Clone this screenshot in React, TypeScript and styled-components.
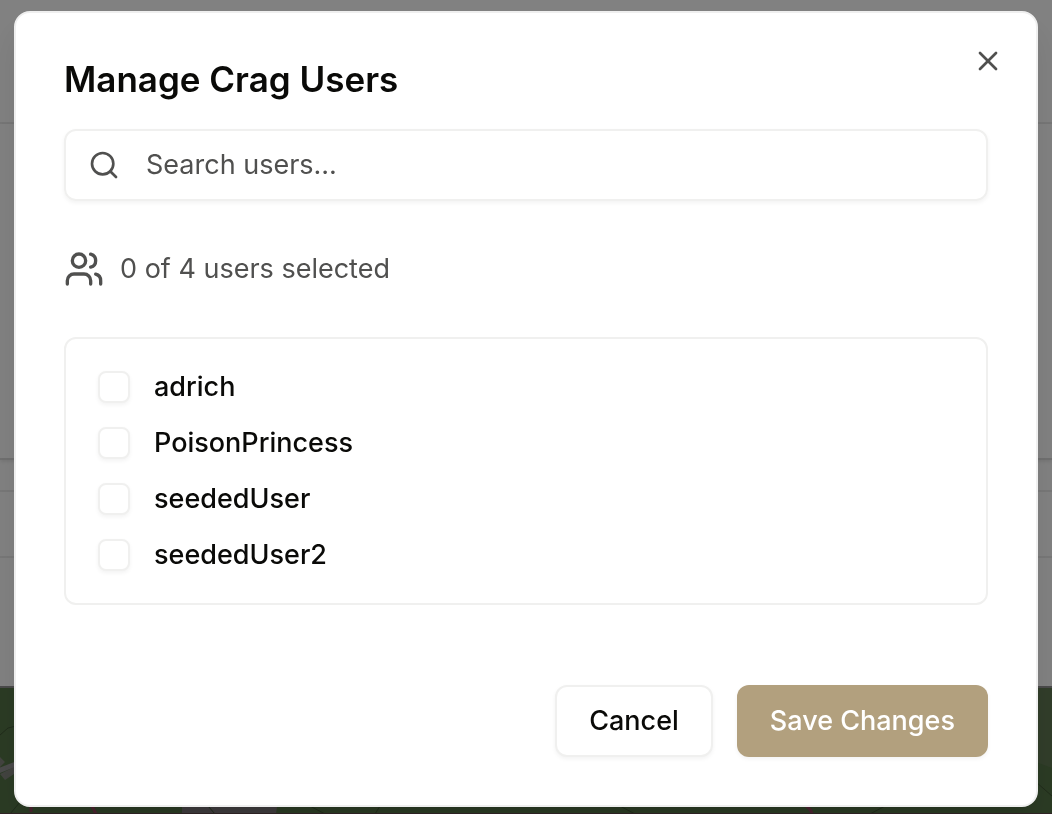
import React, { useState } from "react";
import styled, { createGlobalStyle } from "styled-components";
import { Search, Users, X } from "lucide-react";

const GlobalStyle = createGlobalStyle`
  *, *::before, *::after { box-sizing: border-box; }
  html, body, #root { height: 100%; }
  body { margin: 0; background: #818181; }
  body, button, input { font-family: Inter, "Liberation Sans", sans-serif; }
`;

const Backdrop = styled.div`
  position: fixed;
  inset: 0;
  display: flex;
  flex-direction: column;
`;

const Band = styled.div<{ $height: number; $line: string; $raised?: boolean }>`
  flex: 0 0 ${(p) => p.$height}px;
  border-bottom: 2px solid ${(p) => p.$line};
  box-shadow: ${(p) => (p.$raised ? "0 2px 3px rgba(0, 0, 0, 0.08)" : "none")};
`;

const MapArea = styled.div`
  flex: 1;
  min-height: 0;
  background: #2b3b24;

  svg { display: block; width: 100%; height: 100%; }
`;

const Page = styled.div`
  position: relative;
  padding: 11px 14px 7px;
`;

const Dialog = styled.section`
  position: relative;
  display: flex;
  flex-direction: column;
  padding: 48px;
  border: 2px solid #efefef;
  border-radius: 16px;
  background: #fff;
  box-shadow: 0 20px 30px -6px rgba(0, 0, 0, 0.1), 0 8px 12px -8px rgba(0, 0, 0, 0.1);
`;

const Title = styled.h1`
  margin: 0 0 32px;
  font-size: 35px;
  font-weight: 600;
  line-height: 36px;
  color: #0a0a08;
`;

const CloseButton = styled.button`
  position: absolute;
  top: 32px;
  right: 32px;
  display: flex;
  padding: 0;
  border: 0;
  background: none;
  color: #50504f;
`;

const SearchField = styled.label`
  display: flex;
  align-items: center;
  gap: 26px;
  height: 72px;
  padding: 0 22px;
  border: 2px solid #f0f0ef;
  border-radius: 12px;
  box-shadow: 0 2px 4px rgba(0, 0, 0, 0.05);
  color: #50504f;
`;

const SearchInput = styled.input`
  flex: 1;
  min-width: 0;
  padding: 0;
  border: 0;
  outline: 0;
  background: none;
  font-size: 27px;
  line-height: 40px;
  color: #0a0a08;

  &::placeholder { color: #50504f; opacity: 1; }
`;

const Summary = styled.p`
  display: flex;
  align-items: center;
  gap: 16px;
  margin: 48px 0;
  font-size: 27px;
  line-height: 40px;
  color: #50504f;
`;

const UserList = styled.ul`
  display: flex;
  flex-direction: column;
  gap: 16px;
  margin: 0;
  padding: 28px 32px;
  list-style: none;
  border: 2px solid #f0f0ef;
  border-radius: 12px;
`;

const UserLabel = styled.label`
  display: flex;
  align-items: center;
  gap: 24px;
  font-size: 27px;
  font-weight: 500;
  line-height: 40px;
  color: #0a0a08;
`;

const Checkbox = styled.input`
  appearance: none;
  flex: none;
  width: 32px;
  height: 32px;
  margin: 0;
  border: 2px solid #f0f0ef;
  border-radius: 8px;
  background: #fff;
  box-shadow: 0 2px 4px rgba(0, 0, 0, 0.05);

  &:checked { background: #b2a07e; }
`;

const Footer = styled.footer`
  display: flex;
  justify-content: flex-end;
  gap: 24px;
  margin-top: 80px;
`;

const Button = styled.button<{ $primary?: boolean }>`
  height: 72px;
  padding: 0 ${(p) => (p.$primary ? 33 : 32)}px;
  border: ${(p) => (p.$primary ? "0" : "2px solid #f0f0ef")};
  border-radius: 12px;
  background: ${(p) => (p.$primary ? "#b2a07e" : "#fff")};
  box-shadow: 0 2px 4px rgba(0, 0, 0, 0.05);
  font-size: 27px;
  font-weight: 500;
  line-height: 40px;
  color: ${(p) => (p.$primary ? "#fff" : "#0a0a08")};
`;

const users = ["adrich", "PoisonPrincess", "seededUser", "seededUser2"];

export default function App() {
  const [query, setQuery] = useState("");
  const [selected, setSelected] = useState<string[]>([]);
  const toggle = (name: string) =>
    setSelected((s) => (s.includes(name) ? s.filter((n) => n !== name) : [...s, name]));
  const visible = users.filter((n) => n.toLowerCase().includes(query.toLowerCase()));

  return (
    <>
      <GlobalStyle />
      <Backdrop aria-hidden="true">
        <Band $height={124} $line="#767676" />
        <Band $height={336} $line="#6f6f6f" $raised />
        <Band $height={32} $line="#777" />
        <Band $height={66} $line="#777" />
        <Band $height={130} $line="#4a4a4a" />
        <MapArea>
          <svg viewBox="0 0 1052 126" preserveAspectRatio="none" fill="none">
            <path d="M1036 0H1052V80L1036 74Z" fill="#313d2a" />
            <path d="M182 112H278L276 126H182Z" fill="#3f3c3e" />
            <path d="M0 69L5 74L0 79ZM0 86L14 79V86L5 92Z" fill="#42433f" />
            <path d="M-2 83L16 76" stroke="#4a4a4a" strokeWidth="5" />
            <path d="M0 47L8 40L16 38M10 126L20 114M1052 108L1036 94" stroke="#202c1b" />
            <path d="M92 118L96 126M806 118Q811 121 812 126M31 118V124" stroke="#4b2330" strokeWidth="3" />
            <path d="M208 118L215 126M310 118L325 126M380 118L375 126M620 118L635 126M870 126L885 118" stroke="#202c1b" />
            <path d="M0 126H1052" stroke="#302425" strokeWidth="2" />
          </svg>
        </MapArea>
      </Backdrop>
      <Page>
        <Dialog role="dialog" aria-labelledby="dialog-title">
          <Title id="dialog-title">Manage Crag Users</Title>
          <SearchField>
            <Search size={32} strokeWidth={2} aria-hidden="true" />
            <SearchInput
              aria-label="Search users"
              placeholder="Search users..."
              value={query}
              onChange={(e) => setQuery(e.target.value)}
            />
          </SearchField>
          <Summary>
            <Users size={40} aria-hidden="true" />
            <span>{`${selected.length} of ${users.length} users selected`}</span>
          </Summary>
          <UserList>
            {visible.map((name) => (
              <li key={name}>
                <UserLabel>
                  <Checkbox type="checkbox" checked={selected.includes(name)} onChange={() => toggle(name)} />
                  {name}
                </UserLabel>
              </li>
            ))}
          </UserList>
          <Footer>
            <Button type="button">Cancel</Button>
            <Button type="button" $primary>Save Changes</Button>
          </Footer>
          <CloseButton type="button" aria-label="Close">
            <X size={32} aria-hidden="true" />
          </CloseButton>
        </Dialog>
      </Page>
    </>
  );
}
